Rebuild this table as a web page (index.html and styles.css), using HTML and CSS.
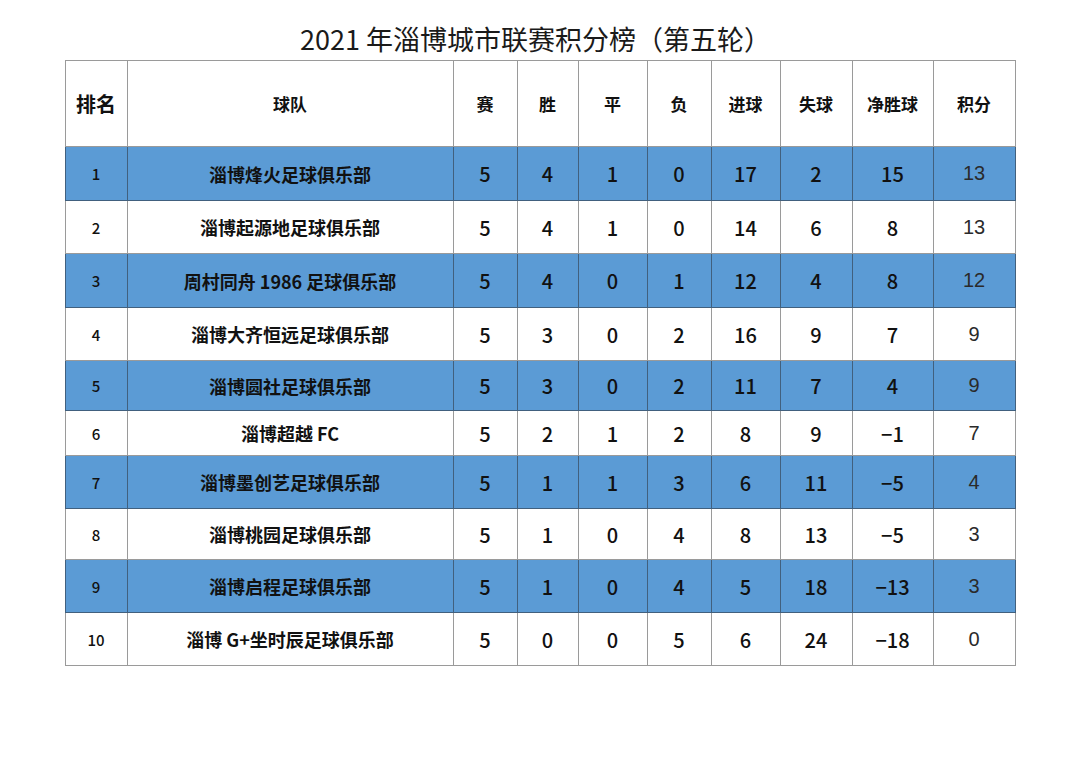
FILE: index.html
```html
<!DOCTYPE html>
<html lang="zh-CN">
<head>
<meta charset="utf-8">
<title>2021 年淄博城市联赛积分榜（第五轮）</title>
<link rel="stylesheet" href="styles.css">
</head>
<body>
<div class="page">
  <h1 class="title">2021 年淄博城市联赛积分榜（第五轮）</h1>
  <table class="standings">
    <colgroup>
      <col class="c-rank"><col class="c-team"><col class="c-n1"><col class="c-n2"><col class="c-n3"><col class="c-n4"><col class="c-n5"><col class="c-n6"><col class="c-n7"><col class="c-n8">
    </colgroup>
    <thead>
      <tr>
        <th class="h-rank">排名</th><th>球队</th><th>赛</th><th>胜</th><th>平</th><th>负</th><th>进球</th><th>失球</th><th>净胜球</th><th>积分</th>
      </tr>
    </thead>
    <tbody>
      <tr class="blue"><td class="rank">1</td><td class="team">淄博烽火足球俱乐部</td><td>5</td><td>4</td><td>1</td><td>0</td><td>17</td><td>2</td><td>15</td><td class="pts">13</td></tr>
      <tr><td class="rank">2</td><td class="team">淄博起源地足球俱乐部</td><td>5</td><td>4</td><td>1</td><td>0</td><td>14</td><td>6</td><td>8</td><td class="pts">13</td></tr>
      <tr class="blue"><td class="rank">3</td><td class="team">周村同舟 1986 足球俱乐部</td><td>5</td><td>4</td><td>0</td><td>1</td><td>12</td><td>4</td><td>8</td><td class="pts">12</td></tr>
      <tr><td class="rank">4</td><td class="team">淄博大齐恒远足球俱乐部</td><td>5</td><td>3</td><td>0</td><td>2</td><td>16</td><td>9</td><td>7</td><td class="pts">9</td></tr>
      <tr class="blue"><td class="rank">5</td><td class="team">淄博圆社足球俱乐部</td><td>5</td><td>3</td><td>0</td><td>2</td><td>11</td><td>7</td><td>4</td><td class="pts">9</td></tr>
      <tr><td class="rank">6</td><td class="team">淄博超越 FC</td><td>5</td><td>2</td><td>1</td><td>2</td><td>8</td><td>9</td><td>−1</td><td class="pts">7</td></tr>
      <tr class="blue"><td class="rank">7</td><td class="team">淄博墨创艺足球俱乐部</td><td>5</td><td>1</td><td>1</td><td>3</td><td>6</td><td>11</td><td>−5</td><td class="pts">4</td></tr>
      <tr><td class="rank">8</td><td class="team">淄博桃园足球俱乐部</td><td>5</td><td>1</td><td>0</td><td>4</td><td>8</td><td>13</td><td>−5</td><td class="pts">3</td></tr>
      <tr class="blue"><td class="rank">9</td><td class="team">淄博启程足球俱乐部</td><td>5</td><td>1</td><td>0</td><td>4</td><td>5</td><td>18</td><td>−13</td><td class="pts">3</td></tr>
      <tr><td class="rank">10</td><td class="team">淄博 G+坐时辰足球俱乐部</td><td>5</td><td>0</td><td>0</td><td>5</td><td>6</td><td>24</td><td>−18</td><td class="pts">0</td></tr>
    </tbody>
  </table>
</div>
</body>
</html>
```
FILE: styles.css
```css
html, body {
  margin: 0;
  padding: 0;
  background: #ffffff;
}

body {
  font-family: "Noto Sans CJK SC", "Noto Sans", sans-serif;
  color: #111111;
}

.page {
  display: flex;
  flex-direction: column;
  align-items: center;
  padding-top: 18px;
}

.title {
  margin: 0;
  height: 42px;
  font-size: 27px;
  font-weight: 400;
  line-height: 42px;
  color: #1a1a1a;
  padding-right: 9px;
}

.standings {
  width: 950px;
  border-collapse: collapse;
  table-layout: fixed;
  border: 1px solid #666666;
}

.c-rank { width: 62px; }
.c-team { width: 326px; }
.c-n1 { width: 64px; }
.c-n2 { width: 61px; }
.c-n3 { width: 69px; }
.c-n4 { width: 64px; }
.c-n5 { width: 69px; }
.c-n6 { width: 72px; }
.c-n7 { width: 81px; }
.c-n8 { width: 82px; }

.standings th,
.standings td {
  border: 1px solid #9a9a9a;
  text-align: center;
  vertical-align: middle;
  padding: 0;
}

.standings th {
  height: 85px;
  font-size: 17px;
  font-weight: 700;
}

.standings th.h-rank {
  font-size: 20px;
}

.standings td {
  font-size: 20px;
  font-weight: 500;
  height: 52px;
}

.standings td.rank {
  font-size: 15px;
  font-weight: 500;
}

.standings td.team {
  font-size: 18px;
  font-weight: 700;
}

.standings td.pts {
  font-family: "Liberation Sans", "Noto Sans CJK SC", sans-serif;
  font-weight: 400;
  color: #2a2a2a;
}

.standings tr.blue td {
  background: #5b9bd5;
  border-color: #41607e;
}

.standings tbody tr:nth-child(1) td { height: 53px; }
.standings tbody tr:nth-child(3) td { height: 53px; }
.standings tbody tr:nth-child(5) td { height: 49px; }
.standings tbody tr:nth-child(6) td { height: 44px; }
.standings tbody tr:nth-child(8) td { height: 50px; }
.standings tbody tr:nth-child(10) td { height: 52px; }
```
